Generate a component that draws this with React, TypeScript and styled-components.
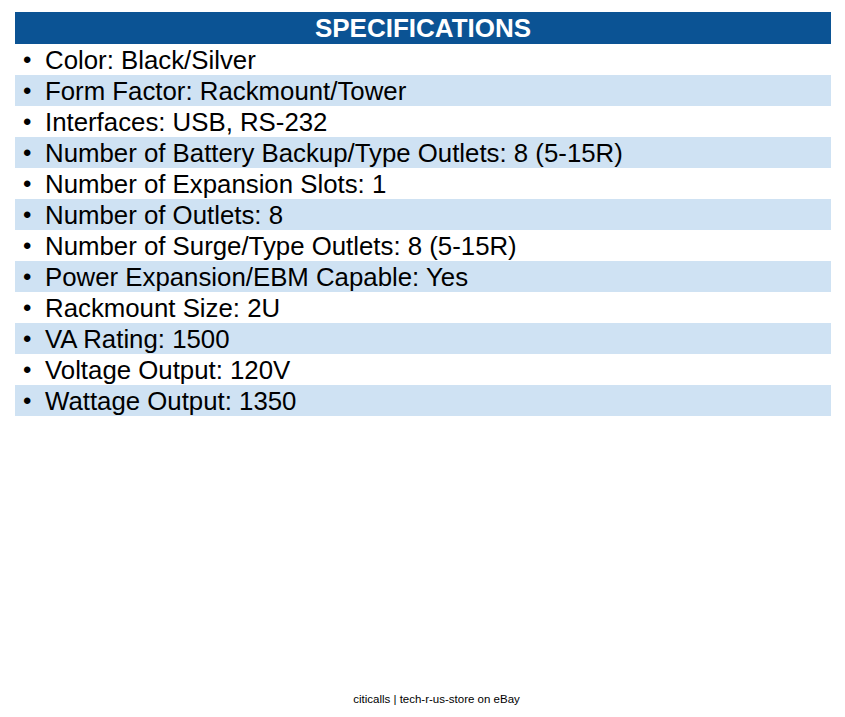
import styled, { createGlobalStyle } from "styled-components";

const GlobalStyle = createGlobalStyle`
  html, body {
    margin: 0;
    padding: 0;
    background: #ffffff;
  }
  body {
    font-family: "Liberation Sans", Arial, sans-serif;
  }
`;

const Page = styled.div`
  width: 845px;
  height: 717px;
  display: flex;
  flex-direction: column;
  box-sizing: border-box;
  padding: 12px 0 0 15px;
`;

const Sheet = styled.div`
  width: 816px;
  display: flex;
  flex-direction: column;
`;

const Header = styled.div`
  height: 32px;
  background-color: #0b5394;
  color: #ffffff;
  font-weight: bold;
  font-size: 26px;
  line-height: 33px;
  text-align: center;
`;

const List = styled.ul`
  list-style: none;
  margin: 0;
  padding: 0;
`;

const Row = styled.li<{ shaded: boolean }>`
  height: 31px;
  display: flex;
  align-items: center;
  background-color: ${({ shaded }) => (shaded ? "#cfe2f3" : "transparent")};
  color: #000000;
  font-size: 25.8px;
  line-height: 32px;
  white-space: nowrap;
`;

const Bullet = styled.span`
  width: 30px;
  padding-left: 8px;
  box-sizing: border-box;
  flex: none;
  font-size: 24px;
`;

const Footer = styled.div`
  margin-top: auto;
  margin-bottom: 12px;
  padding-left: 13px;
  text-align: center;
  font-size: 11.5px;
  color: #000000;
`;

const specs = [
  "Color: Black/Silver",
  "Form Factor: Rackmount/Tower",
  "Interfaces: USB, RS-232",
  "Number of Battery Backup/Type Outlets: 8 (5-15R)",
  "Number of Expansion Slots: 1",
  "Number of Outlets: 8",
  "Number of Surge/Type Outlets: 8 (5-15R)",
  "Power Expansion/EBM Capable: Yes",
  "Rackmount Size: 2U",
  "VA Rating: 1500",
  "Voltage Output: 120V",
  "Wattage Output: 1350",
];

export default function App() {
  return (
    <>
      <GlobalStyle />
      <Page>
        <Sheet>
          <Header>SPECIFICATIONS</Header>
          <List>
            {specs.map((s, i) => (
              <Row key={s} shaded={i % 2 === 1}>
                <Bullet>•</Bullet>
                {s}
              </Row>
            ))}
          </List>
        </Sheet>
        <Footer>citicalls | tech-r-us-store on eBay</Footer>
      </Page>
    </>
  );
}
